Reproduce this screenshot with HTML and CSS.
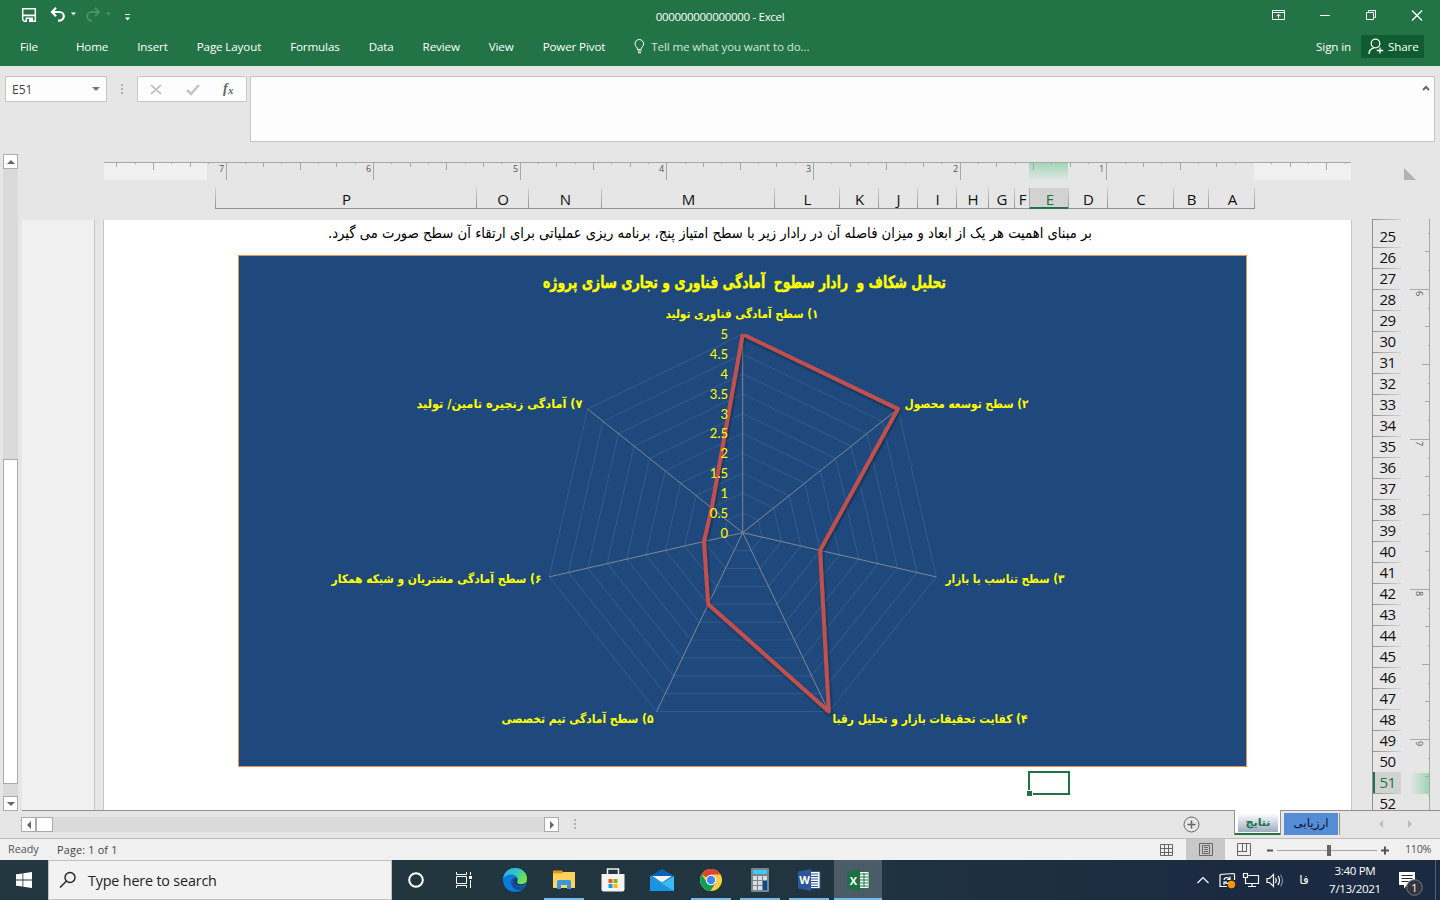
FILE: index.html
```html
<!DOCTYPE html>
<html lang="en">
<head>
  <meta charset="UTF-8" />
  <meta name="viewport" content="width=device-width, initial-scale=1.0"/>
  <title>000000000000000 - Excel</title>
  <link rel="stylesheet" href="styles.css">
</head>
<body>
  <div class="app">
    <header class="header">
      <div class="title-bar">
        <div class="quick-access">
          <svg width="120" height="20" viewBox="0 0 120 20">
            <path d="M1.7 3.7h12.6v12.6H3.2l-1.5-1.5z" fill="none" stroke="#fff" stroke-width="1.5"/>
            <path d="M2 9.600h12v1.700H2zM4.500 12.500h7.500v4H4.500z" fill="#fff"/>
            <path d="M6 14h2v3H6z" fill="#227447"/>
            <path d="M31 7h7.500a4.300 4.300 0 0 1 0 8.600h-1.500M35 2.800L31 7l4 4.200" fill="none" stroke="#fff" stroke-width="2.200"/>
            <path d="M50 7.500h5l-2.500 3zM104 12.500h5l-2.500 3z" fill="#fff"/>
            <path d="M104 9.500h5" stroke="#fff"/>
            <path d="M78 7h-7.500a4.300 4.300 0 0 0 0 8.600h1M74 2.800L78 7l-4 4.200" fill="none" stroke="#4d9069" stroke-width="1.800"/>
            <path d="M85 7.500h5l-2.500 3z" fill="#4d9069"/>
          </svg>
        </div>
        <div class="doc-title">000000000000000 - Excel</div>
        <div class="window-buttons">
          <svg width="160" height="16" viewBox="0 0 160 16" fill="none" stroke="#fff">
            <path d="M2.500 2.500h12v9h-12zM2.500 4.500h12M8.500 10.500v-4M6.500 8.200l2-2 2 2"/>
            <path d="M50 7.500h10"/>
            <path d="M96.500 4.500h7v7h-7zM98.500 4.500v-2h7v7h-2"/>
            <path d="M142 2.500l10 10M152 2.500l-10 10" stroke-width="1.300"/>
          </svg>
        </div>
      </div>
      <nav class="ribbon-tabs">
        <span class="tab-file">File</span>
        <span>Home</span>
        <span>Insert</span>
        <span>Page Layout</span>
        <span>Formulas</span>
        <span>Data</span>
        <span>Review</span>
        <span>View</span>
        <span>Power Pivot</span>
        <span class="tell-me">
          <svg width="11" height="15" viewBox="0 0 11 15" fill="none" stroke="#fff"><path d="M3.500 10.500C3.500 8 1 7.500 1 4.800a4.300 4.300 0 0 1 8.600 0c0 2.700-2.500 3.200-2.500 5.700zM3.500 12h4M4 13.800h3"/></svg>
          Tell me what you want to do...
        </span>
        <span class="sign-in">Sign in</span>
        <span class="share">
          <svg width="16" height="17" viewBox="0 0 16 17" fill="none" stroke="#fff" stroke-width="1.300"><circle cx="7.500" cy="5.500" r="4.300"/><path d="M1 16c0-3.500 2-5.500 5-6.200M12 9.500v6M8.800 12.500h6.400"/></svg>
          Share
        </span>
      </nav>
    </header>

    <div class="formula-bar">
      <div class="name-box">E51 <i class="caret"></i></div>
      <div class="grip"><i></i><i></i><i></i></div>
      <div class="fx-box">
        <svg width="108" height="24" viewBox="0 0 108 24" fill="none">
          <path d="M13 8l10 9M23 8l-10 9" stroke="#c4c4c4" stroke-width="1.800"/>
          <path d="M49 13l4 4 8-9" stroke="#c4c4c4" stroke-width="2.500"/>
          <text x="85" y="16" class="fx-f">f</text>
          <text x="90" y="17" class="fx-x">x</text>
        </svg>
      </div>
      <div class="formula-input">
        <svg width="8" height="6" viewBox="0 0 8 6"><path d="M1 5l3-3 3 3" fill="none" stroke="#666" stroke-width="2"/></svg>
      </div>
    </div>

    <main class="workspace">
      <div class="v-scroll">
        <div class="scroll-btn"><i class="arrow-up"></i></div>
        <div class="v-track"><div class="v-thumb"></div></div>
        <div class="scroll-btn"><i class="arrow-down"></i></div>
      </div>
      <div class="sheet-area">
        <svg id="hRuler" class="h-ruler" width="1247" height="18"></svg>
        <div class="columns" id="columns"></div>
        <div class="pages">
          <div class="prev-page"></div>
          <div class="page">
            <svg class="note" width="764" height="35">
              <text x="382" y="18" textLength="764" lengthAdjust="spacingAndGlyphs">بر مبنای اهمیت هر یک از ابعاد و میزان فاصله آن در رادار زیر با سطح امتیاز پنج، برنامه ریزی عملیاتی برای ارتقاء آن سطح صورت می گیرد.</text>
            </svg>
            <svg id="chart" class="chart" width="1009" height="512" viewBox="238 255 1009 512">
              <defs>
                <filter id="lineShadow" x="-10%" y="-10%" width="125%" height="125%">
                  <feDropShadow dx="1" dy="2" stdDeviation="1.500" flood-color="#000" flood-opacity=".4"/>
                </filter>
                <clipPath id="plotClip"><rect x="500" y="334" width="500" height="400"/></clipPath>
              </defs>
              <rect x="238.500" y="255.500" width="1008" height="511" class="chart-bg"/>
              <g id="grid"></g>
              <g clip-path="url(#plotClip)"><polygon id="series" class="series" filter="url(#lineShadow)"/></g>
              <g id="scale"></g>
              <text class="chart-title" x="744.500" y="287.500" textLength="403" lengthAdjust="spacingAndGlyphs">تحلیل شکاف و  رادار سطوح  آمادگی فناوری و تجاری سازی پروژه</text>
              <g class="chart-labels">
                <text x="742" y="317.500" textLength="153" lengthAdjust="spacingAndGlyphs">۱) سطح آمادگی فناوری تولید</text>
                <text x="966.500" y="407.500" textLength="124" lengthAdjust="spacingAndGlyphs">۲) سطح توسعه محصول</text>
                <text x="1005" y="582.500" textLength="119" lengthAdjust="spacingAndGlyphs">۳) سطح تناسب با بازار</text>
                <text x="930" y="722.500" textLength="195" lengthAdjust="spacingAndGlyphs">۴) کفایت تحقیقات بازار و تحلیل رقبا</text>
                <text x="577.500" y="722.500" textLength="152" lengthAdjust="spacingAndGlyphs">۵) سطح آمادگی تیم تخصصی</text>
                <text x="436.500" y="582.500" textLength="210" lengthAdjust="spacingAndGlyphs">۶) سطح آمادگی مشتریان و شبکه همکار</text>
                <text x="499.500" y="407.500" textLength="166" lengthAdjust="spacingAndGlyphs">۷) آمادگی زنجیره تامین/ تولید</text>
              </g>
            </svg>
            <div class="active-cell"></div>
          </div>
        </div>
      </div>
      <div class="row-side">
        <div class="select-all"></div>
        <div class="rows" id="rows"></div>
      </div>
      <div class="v-ruler-side">
        <svg id="vRuler" width="20" height="591"></svg>
      </div>
    </main>

    <div class="sheet-bar">
      <div class="h-scroll">
        <div class="scroll-btn"><i class="arrow-left"></i></div>
        <div class="h-thumb"></div>
        <div class="h-track"></div>
        <div class="scroll-btn"><i class="arrow-right"></i></div>
      </div>
      <div class="grip"><i></i><i></i><i></i></div>
      <svg class="add-sheet" width="17" height="17" viewBox="0 0 17 17" fill="none" stroke="#666"><circle cx="8.500" cy="8.500" r="7.500"/><path d="M4.500 8.500h8M8.500 4.500v8" stroke-width="1.500"/></svg>
      <div class="sheet-tab active"><span>نتایج</span></div>
      <div class="sheet-tab blue"><span>ارزیابی</span></div>
      <div class="tab-nav"><i class="arrow-left"></i><i class="arrow-right"></i></div>
    </div>

    <footer class="status-bar">
      <span class="ready">Ready</span>
      <span class="page-count">Page: 1 of 1</span>
      <div class="view-btn">
        <svg width="14" height="14" viewBox="0 0 14 14" fill="none" stroke="#666"><path d="M.500 1.500h12v11h-12zM.500 5.500h12M.500 9.500h12M4.500 1.500v11M8.500 1.500v11"/></svg>
      </div>
      <div class="view-btn selected">
        <svg width="14" height="14" viewBox="0 0 14 14" fill="none" stroke="#666"><path d="M.500 .500h13v12h-13zM3.500 2.500h7v8h-7zM5 4.500h4M5 6.500h4M5 8.500h4"/></svg>
      </div>
      <div class="view-btn">
        <svg width="15" height="14" viewBox="0 0 15 14" fill="none" stroke="#666"><path d="M.500 .500h13v12h-13zM5.500 .500v7.500M9.500 .500v7.500M1 8.500h9"/></svg>
      </div>
      <svg class="zoom-slider" width="124" height="14" viewBox="0 0 124 14">
        <path d="M2 7.500h6M116 7.500h8M120 3.500v8" stroke="#555" stroke-width="2"/>
        <path d="M12 7.500h100" stroke="#a6a6a6"/>
        <path d="M62 2h4v11h-4z" fill="#666"/>
      </svg>
      <span class="zoom-value">110%</span>
    </footer>

    <div class="taskbar">
      <div class="start">
        <svg width="16" height="16" viewBox="0 0 16 16" fill="#fff"><path d="M0 2.300l6.500-.9v6.200H0zM7.300 1.300L16 0v7.600H7.300zM0 8.400h6.500v6.200L0 13.700zM7.300 8.400H16V16l-8.700-1.300z"/></svg>
      </div>
      <div class="search">
        <svg width="18" height="18" viewBox="0 0 18 18" fill="none" stroke="#222" stroke-width="1.400"><circle cx="11" cy="6.500" r="5"/><path d="M7.300 10.200L1 16.500"/></svg>
        Type here to search
      </div>
      <div class="task cortana"><svg width="18" height="18" viewBox="0 0 18 18"><circle cx="9" cy="9" r="6.800" fill="none" stroke="#fff" stroke-width="2"/></svg></div>
      <div class="task task-view"><svg width="18" height="18" viewBox="0 0 18 18" fill="none" stroke="#fff"><path d="M1.500 1v2.500h10V1M1.500 5.500h10v7h-10zM1.500 17v-2.500h10V17M15.500 1v3M15.500 9v8"/><path d="M14 5h3v3h-3z" fill="#fff" stroke="none"/></svg></div>
      <div class="task">
        <svg width="24" height="24" viewBox="0 0 24 24">
          <defs>
            <linearGradient id="edgeTop" x1="0" y1="0" x2="1" y2=".5"><stop offset="0" stop-color="#2badee"/><stop offset=".5" stop-color="#30c2cf"/><stop offset="1" stop-color="#74e447"/></linearGradient>
          </defs>
          <circle cx="12" cy="12" r="12" fill="#0a7bd6"/>
          <path d="M0 11C1 4 6 0 12 0c7 0 12 5 12 10.500 0 4-3 6-6 6-2.500 0-4-1-4-2 0-.8 1-1.200 1-3C15 9 12 6.500 8 6.500c-4 0-7 2-8 4.500z" fill="url(#edgeTop)"/>
          <path d="M9 11c-3 5 1 11 7 11 3 0 5-2 7-4.500C17 20 12 17.500 12 14c0-1.500 1-2.500 2-3-1.500-2-4-1.500-5 0z" fill="#104e9c"/>
          <path d="M24 14.500c-1 2.500-4 3.500-7 3.200-3-.2-5.500-2-5.300-4.400.2-2 1.300-3.300 2.800-3.300-.5 1.500-.8 2.500-.5 4.500 1 2 4 2 6 1.500 1.500-.3 3-1 4-1.500z" fill="#1f3542"/>
        </svg>
      </div>
      <div class="task open">
        <svg width="22" height="20" viewBox="0 0 22 20"><path d="M0 2V.500h9L10.500 3v3H0z" fill="#e29b0c"/><path d="M0 3.500h9l1.500-1.500H22v16H0z" fill="#ffd35e"/><path d="M4 11.500q0-1.500 1.500-1.500h11q1.500 0 1.500 1.500V19h-4v-4H8v4H4z" fill="#3a96dd"/></svg>
      </div>
      <div class="task">
        <svg width="24" height="24" viewBox="0 0 24 24"><path d="M6.500 7V1h11v6" fill="none" stroke="#eee" stroke-width="1.500"/><path d="M.500 6h23v15.500q0 2-2 2h-19q-2 0-2-2z" fill="#f3f3f3"/><path d="M7.500 11h4v4h-4z" fill="#f25022"/><path d="M12.500 11h4v4h-4z" fill="#7fba00"/><path d="M7.500 16h4v4h-4z" fill="#00a4ef"/><path d="M12.500 16h4v4h-4z" fill="#ffb900"/></svg>
      </div>
      <div class="task">
        <svg width="24" height="24" viewBox="0 0 24 24"><path d="M0 8L12 1l12 7v8H0z" fill="#0963b4"/><path d="M0 8l12 7 12-7v15H0z" fill="#36bdf3"/><path d="M0 8l24 15H0z" fill="#1a93e2"/><path d="M2 8h20L12 14.500z" fill="#f0f3f6"/></svg>
      </div>
      <div class="task open">
        <svg width="24" height="24" viewBox="0 0 24 24"><circle cx="12" cy="12" r="11" fill="#ffcd40"/><path d="M12 12L2.500 6.500A11 11 0 0 1 21.500 6.500H12z" fill="#db4437"/><path d="M2.500 6.500A11 11 0 0 0 11.500 23L16.500 15 12 12 7 13z" fill="#0f9d58"/><circle cx="12" cy="12" r="5.200" fill="#fff"/><circle cx="12" cy="12" r="4.200" fill="#4285f4"/></svg>
      </div>
      <div class="task open">
        <svg width="18" height="24" viewBox="0 0 18 24"><rect width="18" height="24" rx="1" fill="#7a848b"/><path d="M2 2h14v4H2z" fill="#3ccbf4"/><path d="M2 8h4v4H2zM7 8h4v4H7zM12 8h4v4h-4zM2 13h4v4H2zM7 13h4v4H7zM2 18h4v4H2zM7 18h4v4H7z" fill="#d7dde1"/><path d="M12 13h4v9h-4z" fill="#0b4a8f"/></svg>
      </div>
      <div class="task open">
        <svg width="24" height="24" viewBox="0 0 24 24"><path d="M12 3.500h11v17H12z" fill="#fff" stroke="#2b579a"/><path d="M14 6h7M14 8.500h7M14 11h7M14 13.500h7M14 16h7M14 18.500h7" stroke="#2b579a"/><path d="M1 3.500L14 1v22L1 20.500z" fill="#2b579a"/><text x="7.500" y="16" class="app-letter">W</text></svg>
      </div>
      <div class="task open current">
        <svg width="24" height="24" viewBox="0 0 24 24"><path d="M12 3.500h11v17H12z" fill="#fff" stroke="#217346"/><path d="M14 6h8M14 9h8M14 12h8M14 15h8M14 18h8M18 5v14" stroke="#217346"/><path d="M1 3.500L14 1v22L1 20.500z" fill="#1d7044"/><text x="7.500" y="16.500" class="app-letter">X</text></svg>
      </div>
      <div class="tray">
        <svg width="90" height="20" viewBox="0 0 90 20" fill="none" stroke="#fff" stroke-width="1.200">
          <path d="M1.500 13l5.500-5.500L12.500 13"/>
          <path d="M24 4.500l14-1M24 4.500v12h7M38.500 3.500V10M28 10c0-2.500 4-3.500 5.500-1M34 6.500V9.500h-3M34 11c-.5 2.500-4 3.500-5.500 1M28 15v-3h3"/>
          <circle cx="35.500" cy="14.500" r="3.700" fill="#ff9800" stroke="none"/>
          <path d="M52.500 5.500h10v8h-13v-3.500M56 13.500v3M52 16.500h8M47.500 3.500h4v4h-4zM49.500 7.500v3"/>
          <path d="M71 8.500h2.500l4-4v12l-4-4H71zM79.500 8q1.500 2 0 5M82 6q3 4 0 9"/><path d="M84.500 4.500q4 6 0 12" stroke="#7b8594"/>
        </svg>
        <span class="lang">فا</span>
        <div class="clock"><div>3:40 PM</div><div>7/13/2021</div></div>
        <svg class="notify" width="26" height="26" viewBox="0 0 26 26">
          <path d="M1 1h16v13H9l-3 3.500V14H1z" fill="#fff"/><path d="M3.500 4.500h11M3.500 7.500h11M3.500 10.500h7" stroke="#1b2a41"/>
          <circle cx="16.500" cy="16.500" r="7.800" fill="#30353d" stroke="#777b82"/>
          <text x="16.500" y="20.500" class="badge-num">1</text>
        </svg>
        <i class="show-desktop"></i>
      </div>
    </div>
  </div>
  <script src="script.js"></script>
</body>
</html>
```

FILE: styles.css
```css
body {
  margin: 0;
  font-family: "Open Sans", "Noto Sans", "DejaVu Sans", sans-serif;
  font-size: 12px;
  background: #e6e6e6;
}
svg { display: block; flex: none; }
.app {
  width: 1440px;
  height: 900px;
  display: flex;
  flex-direction: column;
  overflow: hidden;
}

/* header */
.header { height: 66px; background: #227447; color: #fff; }
.title-bar {
  height: 34px;
  display: flex;
  align-items: center;
  justify-content: space-between;
}
.quick-access { width: 220px; padding: 0 0 4px 21px; box-sizing: border-box; }
.doc-title { font-size: 11.5px; letter-spacing: -0.3px; padding-bottom: 1px; }
.window-buttons { width: 220px; padding: 0 10px 2px 50px; box-sizing: border-box; }
.ribbon-tabs {
  height: 26px;
  display: flex;
  align-items: center;
  gap: 29px;
  padding: 0 16px 0 20px;
  font-size: 11.6px;
  letter-spacing: -0.12px;
  white-space: nowrap;
  position: relative;
  top: -1px;
}
.tab-file { margin-right: 9px; padding-top: 1px; }
.tell-me { display: flex; align-items: center; gap: 6px; color: #d3e5da; }
.sign-in { margin-left: auto; }
.share {
  display: flex;
  align-items: center;
  gap: 4px;
  width: 63px;
  height: 23px;
  margin-left: -19px;
  padding-left: 7px;
  box-sizing: border-box;
  background: #0e5c2f;
}

/* formula bar */
.formula-bar { display: flex; height: 88px; padding: 10px 5px 0; box-sizing: border-box; }
.name-box, .fx-box {
  height: 26px;
  box-sizing: border-box;
  border: 1px solid #c6c6c6;
  background: #fdfdfd;
}
.name-box {
  width: 102px;
  display: flex;
  align-items: center;
  justify-content: space-between;
  padding: 0 6px;
  color: #444;
}
.caret { border: 4px solid transparent; border-top-color: #777; border-bottom: 0; }
.grip { display: flex; flex-direction: column; gap: 2px; width: 30px; align-items: center; }
.grip i { width: 2px; height: 2px; background: #b0b0b0; }
.formula-bar .grip { padding-top: 8px; }
.fx-box { width: 110px; }
.fx-f { font: italic bold 14px "Liberation Serif", serif; fill: #666; }
.fx-x { font: italic bold 11px "Liberation Serif", serif; fill: #666; }
.formula-input {
  flex: 1;
  height: 66px;
  margin-left: 3px;
  box-sizing: border-box;
  border: 1px solid #c6c6c6;
  background: #fdfdfd;
  display: flex;
  justify-content: flex-end;
  padding: 8px 4px;
}

/* workspace */
.workspace { height: 657px; display: flex; }
.v-scroll { width: 22px; padding-left: 3px; box-sizing: border-box; display: flex; flex-direction: column; }
.scroll-btn {
  width: 15px;
  height: 15px;
  box-sizing: border-box;
  border: 1px solid #ababab;
  background: #fff;
  display: flex;
  align-items: center;
  justify-content: center;
}
.v-track { flex: 1; width: 15px; background: #dadada; }
.v-thumb { height: 325px; margin-top: 290px; box-sizing: border-box; border: 1px solid #ababab; background: #fff; }
.arrow-up { border: 4px solid transparent; border-bottom-color: #666; border-top: 0; }
.arrow-down { border: 4px solid transparent; border-top-color: #666; border-bottom: 0; }
.arrow-left { border: 4px solid transparent; border-right-color: #666; border-left: 0; }
.arrow-right { border: 4px solid transparent; border-left-color: #666; border-right: 0; }

.sheet-area { width: 1350px; }
.h-ruler { margin: 8px 0 8px 82px; }
.columns {
  display: flex;
  width: 1040px;
  height: 21px;
  margin-left: 193px;
  box-sizing: border-box;
  border-bottom: 1px solid #919191;
}
.col {
  box-sizing: border-box;
  height: 21px;
  flex: none;
  text-align: center;
  padding-left: 2px;
  font: 15px/22px "Open Sans", sans-serif;
  color: #111;
  background: linear-gradient(#d0d0d0, #919191) left / 1px 100% no-repeat;
}
.col:last-child { background: linear-gradient(#d0d0d0, #919191) left / 1px 100% no-repeat, linear-gradient(#d0d0d0, #919191) right / 1px 100% no-repeat; }
.col.active { color: #217346; background: #d2d2d2; border-bottom: 2px solid #217346; border-left: 1px solid #b0b0b0; }
.pages { display: flex; margin-top: 11px; height: 590px; gap: 8px; }
.prev-page { width: 73px; box-sizing: border-box; background: #f1f1f1; border-right: 1px solid #c6c6c6; }
.page {
  width: 1249px;
  box-sizing: border-box;
  background: #fff;
  border-left: 1px solid #c6c6c6;
  border-right: 1px solid #c6c6c6;
  overflow: hidden;
}
.note { margin-left: 224px; overflow: visible; }
.note text { font: 15px "DejaVu Sans", sans-serif; direction: rtl; text-anchor: middle; fill: #000; }
.chart { margin-left: 134px; }
.chart-bg { fill: #1f497d; stroke: #e9924e; }
.grid-line { fill: none; stroke: #2f5988; stroke-width: 1.2; }
.axis { stroke: #828791; stroke-width: 1; }
.series { fill: none; stroke: #c0504d; stroke-width: 4; stroke-linejoin: round; }
.scale-num { font: 13px Lato, sans-serif; fill: #ff0; text-anchor: end; }
.chart-title { font: bold 17px "DejaVu Sans", sans-serif; fill: #ff0; stroke: #ff0; stroke-width: 0.4; text-anchor: middle; direction: rtl; white-space: pre; }
.chart-labels text { font: bold 12px "DejaVu Sans", sans-serif; fill: #ff0; text-anchor: middle; direction: rtl; }
.active-cell {
  position: relative;
  width: 42px;
  height: 24px;
  margin: 4px 0 0 924px;
  box-sizing: border-box;
  border: 2px solid #217346;
}
.active-cell::after {
  content: "";
  position: absolute;
  left: -3px;
  bottom: -3px;
  width: 5px;
  height: 5px;
  background: #217346;
  border: 1px solid #fff;
  border-width: 1px 1px 0 0;
}

.row-side { width: 29px; }
.select-all { height: 12px; margin: 14px 0 0 32px; width: 12px; background: #b2b2b2; clip-path: polygon(0 0, 100% 100%, 0 100%); }
.rows { height: 591px; margin-top: 39px; overflow: hidden; border-left: 1px solid #919191; }
.row {
  height: 21px;
  text-align: center;
  font: 15px/21px "Open Sans", sans-serif;
  letter-spacing: -0.5px;
  color: #111;
  padding-right: 2px;
  padding-left: 3px;
  background: linear-gradient(90deg, #919191, #d4d4d4) top / 100% 1px no-repeat;
}
.row:first-child { height: 28px; line-height: 35px; }
.row:last-child { height: 17px; }
.row.active { color: #217346; background: #d2d2d2; box-shadow: inset 2px 0 #217346; }
.v-ruler-side { padding: 65px 0 0 9px; }
.ruler-num { font: 9px "Open Sans", sans-serif; fill: #555; }
.tick { stroke: #a8a8a8; }

/* sheet tabs */
.sheet-bar {
  height: 29px;
  display: flex;
  align-items: flex-start;
  margin-top: -1px;
  padding-left: 21px;
  box-sizing: border-box;
  background: linear-gradient(#919191, #919191) 22px 0 / 100% 1px no-repeat;
  border-bottom: 1px solid #bdbdbd;
  position: relative;
}
.h-scroll { display: flex; width: 538px; padding-top: 7px; }
.h-thumb { width: 17px; height: 15px; box-sizing: border-box; border: 1px solid #ababab; background: #fff; }
.h-track { flex: 1; background: #dadada; }
.sheet-bar .grip { padding-top: 9px; margin-left: 1px; }
.add-sheet { margin: 6px 0 0 593px; }
.sheet-tab { display: flex; direction: rtl; font-family: "DejaVu Sans", sans-serif; }
.sheet-tab span { flex: 1; text-align: center; line-height: 21px; }
.sheet-tab.active {
  width: 47px;
  height: 25px;
  margin-left: 34px;
  padding: 0 2px 2px 3px;
  box-sizing: border-box;
  background: #fff;
  border: 1px solid #919191;
  border-width: 0 1px 0 1px;
  box-shadow: inset 0 -2px #217346;
  color: #217346;
  font-weight: bold;
  font-size: 11px;
}
.sheet-tab.active span { background: linear-gradient(#fff 15%, #9dacc0); margin-bottom: 1px; line-height: 26px; }
.sheet-tab.blue { width: 54px; height: 22px; margin: 3px 0 0 3px; background: #548dd5; color: #101030; box-shadow: 1px 0 #e6e6e6, 2px 0 #919191; font-size: 12px; }
.tab-nav { display: flex; gap: 25px; margin: 10px 0 0 41px; }
.tab-nav .arrow-left { border-right-color: #bbb; }
.tab-nav .arrow-right { border-left-color: #bbb; }

/* status bar */
.status-bar { height: 21px; display: flex; align-items: center; background: #f0f0f0; color: #555; font-size: 10.8px; white-space: nowrap; }
.ready { width: 57px; padding: 0 0 3px 8px; box-sizing: border-box; }
.page-count { width: 1090px; color: #444; letter-spacing: 0.2px; }
.view-btn { width: 39px; height: 21px; flex: none; display: flex; align-items: center; justify-content: center; }
.view-btn.selected { background: #c8c8c8; }
.zoom-slider { margin-left: 1px; }
.zoom-value { margin-left: 16px; padding-bottom: 2px; letter-spacing: -0.3px; }

/* taskbar */
.taskbar { height: 40px; display: flex; background: linear-gradient(90deg, #22373f, #213540 55%, #1b2a41 85%); }
.start { width: 48px; display: flex; align-items: center; justify-content: center; }
.search {
  width: 344px;
  box-sizing: border-box;
  background: #f2f2f2;
  border: 1px solid #c0c0c0;
  display: flex;
  align-items: center;
  gap: 11px;
  padding-left: 10px;
  font-size: 14.3px;
  color: #222;
  letter-spacing: -0.15px;
}
.task { width: 49px; display: flex; align-items: center; justify-content: center; }
.task.cortana { width: 48px; }
.task.task-view { width: 47px; margin-right: 3px; }
.task.open { background: linear-gradient(#76b9ed, #76b9ed) center bottom / 40px 2px no-repeat; }
.task.current { background: linear-gradient(#76b9ed, #76b9ed) center bottom / 48px 2px no-repeat, #4b5b67; width: 48px; margin-left: 1px; }
.app-letter { font: bold 11px "Open Sans", sans-serif; fill: #fff; text-anchor: middle; }
.tray { margin-left: auto; display: flex; align-items: center; color: #fff; width: 244px; }
.lang { width: 20px; margin-left: 8px; text-align: center; font: 12px "DejaVu Sans", sans-serif; }
.clock { width: 68px; margin-left: 7px; text-align: center; font-size: 11.6px; line-height: 18px; letter-spacing: -0.35px; }
.notify { margin: 8px 0 0 9px; }
.badge-num { font: 11px "Open Sans", sans-serif; fill: #fff; text-anchor: middle; }
.show-desktop { width: 1px; height: 40px; margin-left: 11px; background: #566172; }
```

FILE: script.js
```js
const NS = "http://www.w3.org/2000/svg";

function add(parent, tag, attrs, text) {
  const el = document.createElementNS(NS, tag);
  for (const k in attrs) el.setAttribute(k, attrs[k]);
  if (text !== undefined) el.textContent = text;
  parent.appendChild(el);
  return el;
}

// column headers
const columns = [["P", 261], ["O", 52], ["N", 73], ["M", 173], ["L", 65], ["K", 39], ["J", 39], ["I", 39], ["H", 32],
  ["G", 26], ["F", 15], ["E", 39], ["D", 39], ["C", 66], ["B", 35], ["A", 47]];
columns.forEach(([name, width]) => {
  const div = document.createElement("div");
  div.className = name === "E" ? "col active" : "col";
  div.style.width = width + "px";
  div.textContent = name;
  document.getElementById("columns").appendChild(div);
});

// row headers
for (let n = 25; n <= 52; n++) {
  const div = document.createElement("div");
  div.className = n === 51 ? "row active" : "row";
  div.textContent = n;
  document.getElementById("rows").appendChild(div);
}

// horizontal ruler, zero is at the right
const hRuler = document.getElementById("hRuler");
hRuler.innerHTML = `<defs>
  <linearGradient id="hl" x1="0" y1="0" x2="0" y2="1"><stop offset="0" stop-color="#9fd5b7"/><stop offset="1" stop-color="#e0e6e2"/></linearGradient>
  </defs>
  <rect width="103" height="18" fill="#f1f1f1"/><rect x="1150" width="97" height="18" fill="#f1f1f1"/>
  <rect x="925" width="39" height="18" fill="url(#hl)"/>`;
add(hRuler, "path", { d: "M0 .5h1247", class: "tick" });
for (let i = -5; i <= 62; i++) {
  if (i === 0) continue;
  const x = Math.floor(1149.5 - i * 18.335) + 0.5;
  const len = i % 8 === 0 ? 18 : i % 4 === 0 ? 8 : i % 2 === 0 ? 5 : 2;
  add(hRuler, "path", { d: `M${x} 0v${len}`, class: "tick" });
  if (i > 0 && i % 8 === 0) add(hRuler, "text", { x: x - 7.5, y: 10, class: "ruler-num" }, i / 8);
}

// vertical ruler
const vRuler = document.getElementById("vRuler");
vRuler.innerHTML = `<defs>
  <linearGradient id="vl"><stop offset="0" stop-color="#e6e6e6"/><stop offset="1" stop-color="#9fd5b7"/></linearGradient>
  </defs><rect y="554" width="19" height="21" fill="url(#vl)"/>`;
add(vRuler, "path", { d: "M19.5 0v591", class: "tick" });
for (let i = -3; i <= 27; i++) {
  const y = Math.floor(70.3 + i * 18.75) + 0.5;
  const len = i % 8 === 0 ? 19 : i % 4 === 0 ? 7 : i % 2 === 0 ? 4 : 1;
  add(vRuler, "path", { d: `M${19 - len} ${y}h${len}`, class: "tick" });
  if (i % 8 === 0) add(vRuler, "text", { transform: `translate(6 ${y + 1.5}) rotate(90)`, class: "ruler-num" }, 6 + i / 8);
}

// radar chart
const cx = 742.7, cy = 532.7, radius = 198.5, sides = 7;
const values = [5, 5, 2, 5, 2, 1, 1];

function point(i, v) {
  const a = i * 2 * Math.PI / sides;
  const r = radius * v / 5;
  return (cx + r * Math.sin(a)).toFixed(1) + "," + (cy - r * Math.cos(a)).toFixed(1);
}

const grid = document.getElementById("grid");
for (let v = 0.5; v <= 5; v += 0.5) {
  add(grid, "polygon", { points: values.map((_, i) => point(i, v)).join(" "), class: "grid-line" });
}
values.forEach((_, i) => add(grid, "path", { d: `M${cx},${cy}L${point(i, 5)}`, class: "axis" }));
document.getElementById("series").setAttribute("points", values.map((v, i) => point(i, v)).join(" "));
for (let v = 0; v <= 5; v += 0.5) {
  add(document.getElementById("scale"), "text", { x: 728, y: cy + 5 - radius * v / 5, class: "scale-num" }, v);
}
```
